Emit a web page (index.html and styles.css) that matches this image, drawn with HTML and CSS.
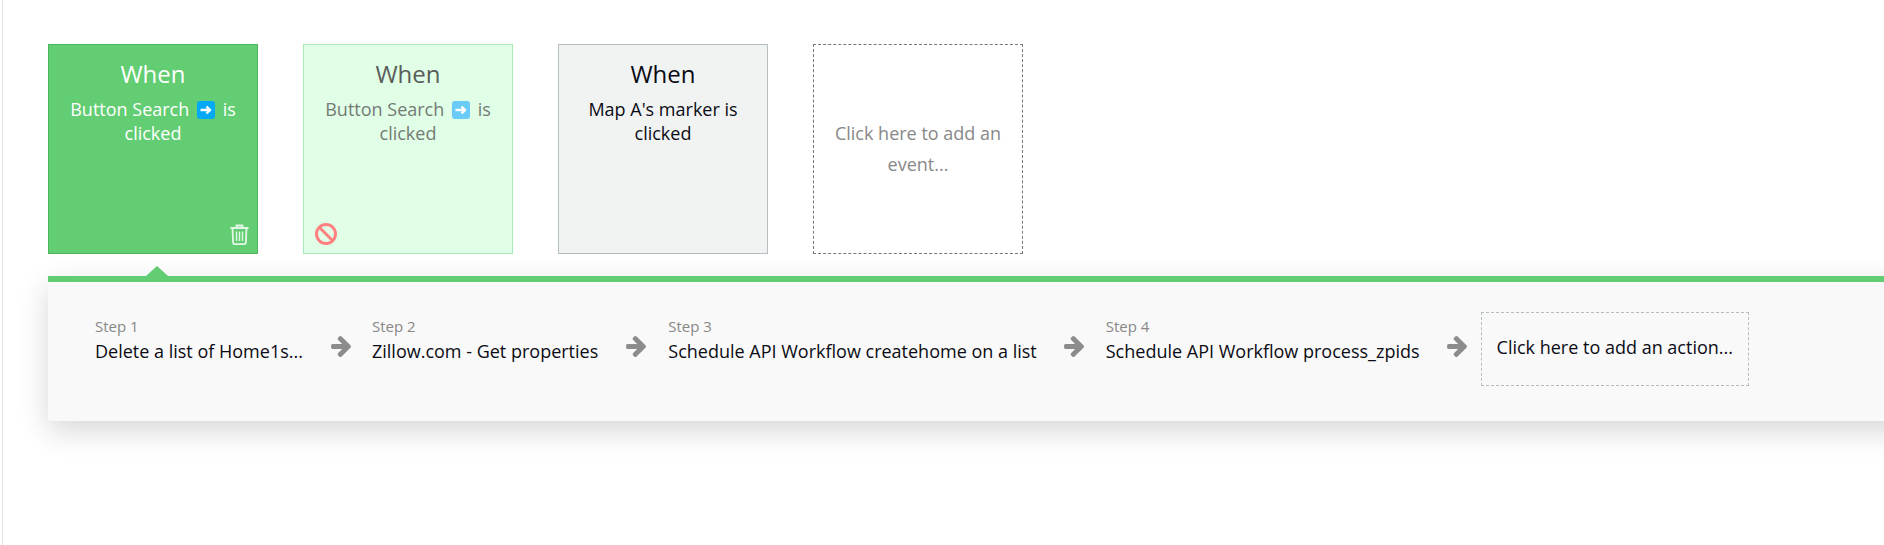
FILE: index.html
```html
<!DOCTYPE html>
<html>
<head>
    <title>Workflow editor</title>
    <link rel="stylesheet" href="styles.css">
</head>
<body>
    <div class="canvas">
        <!-- Events -->
        <div class="events">
            <div class="event active">
                <div class="when">When</div>
                <div class="desc">Button Search
                    <svg class="emoji" viewBox="0 0 18 18"><rect width="18" height="18" rx="3" fill="#03a9f4"/><path d="M3.500 9h9M9.500 5.500 13 9l-3.500 3.500" fill="none" stroke="#fff" stroke-width="2.400"/></svg>
                    is<br>clicked</div>
                <svg class="trash" viewBox="0 0 19 21" fill="none" stroke="#e4f7e7" stroke-width="1.800">
                    <path d="M0.500 4h18M6.500 4V1.500h6V4M2.500 4l.6 14.500q.1 1.700 1.800 1.700h9.200q1.700 0 1.800-1.700L16.500 4"/>
                    <path d="M6.500 7.500v9.500M9.500 7.500v9.500M12.500 7.500v9.500" stroke-width="1.400"/>
                </svg>
            </div>
            <div class="event disabled">
                <div class="when">When</div>
                <div class="desc">Button Search
                    <svg class="emoji" viewBox="0 0 18 18"><rect width="18" height="18" rx="3" fill="#6acbf9"/><path d="M3.500 9h9M9.500 5.500 13 9l-3.500 3.500" fill="none" stroke="#fff" stroke-width="2.400"/></svg>
                    is<br>clicked</div>
                <svg class="ban" viewBox="0 0 22 22" fill="none" stroke="#ff8080" stroke-width="3">
                    <circle cx="11" cy="11" r="9.500"/>
                    <path d="M4.300 4.300l13.400 13.400"/>
                </svg>
            </div>
            <div class="event idle">
                <div class="when">When</div>
                <div class="desc">Map A's marker is clicked</div>
            </div>
            <div class="event add">Click here to add an event...</div>
        </div>

        <!-- Steps -->
        <div class="panel">
            <div class="pointer"></div>
            <div class="steps">
                <div class="step">
                    <div class="step-num">Step 1</div>
                    <div class="step-name">Delete a list of Home1s...</div>
                </div>
                <svg class="arrow" viewBox="128 181 1472 1558"><path d="M1600 960q0 54-37 91l-651 651q-39 37-91 37-51 0-90-37l-75-75q-38-38-38-91t38-91l293-293H245q-52 0-84.500-37.500T128 1024V896q0-53 32.500-90.500T245 768h704L656 474q-38-36-38-90t38-90l75-75q38-38 90-38 53 0 91 38l651 651q37 35 37 90z"/></svg>
                <div class="step">
                    <div class="step-num">Step 2</div>
                    <div class="step-name">Zillow.com - Get properties</div>
                </div>
                <svg class="arrow" viewBox="128 181 1472 1558"><path d="M1600 960q0 54-37 91l-651 651q-39 37-91 37-51 0-90-37l-75-75q-38-38-38-91t38-91l293-293H245q-52 0-84.500-37.500T128 1024V896q0-53 32.500-90.500T245 768h704L656 474q-38-36-38-90t38-90l75-75q38-38 90-38 53 0 91 38l651 651q37 35 37 90z"/></svg>
                <div class="step nudge">
                    <div class="step-num">Step 3</div>
                    <div class="step-name">Schedule API Workflow createhome on a list</div>
                </div>
                <svg class="arrow" viewBox="128 181 1472 1558"><path d="M1600 960q0 54-37 91l-651 651q-39 37-91 37-51 0-90-37l-75-75q-38-38-38-91t38-91l293-293H245q-52 0-84.500-37.500T128 1024V896q0-53 32.500-90.500T245 768h704L656 474q-38-36-38-90t38-90l75-75q38-38 90-38 53 0 91 38l651 651q37 35 37 90z"/></svg>
                <div class="step nudge">
                    <div class="step-num">Step 4</div>
                    <div class="step-name">Schedule API Workflow process_zpids</div>
                </div>
                <svg class="arrow last" viewBox="128 181 1472 1558"><path d="M1600 960q0 54-37 91l-651 651q-39 37-91 37-51 0-90-37l-75-75q-38-38-38-91t38-91l293-293H245q-52 0-84.500-37.500T128 1024V896q0-53 32.500-90.500T245 768h704L656 474q-38-36-38-90t38-90l75-75q38-38 90-38 53 0 91 38l651 651q37 35 37 90z"/></svg>
                <div class="add-action">Click here to add an action...</div>
            </div>
        </div>
    </div>
</body>
</html>
```

FILE: styles.css
```css
html, body { margin: 0; height: 100%; overflow: hidden; background: #fff; }
body { font-family: "Open Sans", sans-serif; font-size: 18px; color: #0b0b14; }
.canvas { height: 545px; margin-left: 2px; border-left: 1px solid #e0e0e0; padding: 44px 0 0 45px; box-sizing: border-box; overflow: hidden; }

.events { display: flex; gap: 45px; }
.event { position: relative; width: 210px; height: 210px; box-sizing: border-box; border: 1px solid #b5bec3; padding: 9px 16px; text-align: center; }
.when { font-size: 24px; line-height: 40px; }
.desc { line-height: 24px; margin-top: 3px; }
.emoji { width: 18px; height: 18px; vertical-align: -3px; margin: 0 3px; }
.event.active { background: #62cd72; border-color: #4ab75b; color: #fff; }
.event.disabled { background: #e0ffe6; border-color: #a9ebb8; color: #757a76; }
.event.disabled .when { color: #5a5d5a; }
.event.idle { background: #f1f3f3; }
.event.add { display: flex; align-items: center; justify-content: center; border: 1px dashed #777; color: #888; line-height: 31px; padding: 0 20px; }
.trash { position: absolute; right: 8px; bottom: 8px; width: 19px; height: 21px; }
.ban { position: absolute; left: 11px; bottom: 8px; width: 22px; height: 22px; }

.panel { position: relative; margin-top: 22px; width: 1900px; height: 145px; box-sizing: border-box; background: #f9f9f9; border-top: 6px solid #62cd72; border-radius: 0 0 0 2px; box-shadow: 0 10px 30px rgba(0, 0, 0, 0.16); }
.pointer { position: absolute; left: 98px; top: -16px; width: 0; height: 0; border-left: 11px solid transparent; border-right: 11px solid transparent; border-bottom: 10px solid #62cd72; }
.steps { display: flex; align-items: flex-start; padding: 30px 0 0 47px; }
.step { margin-top: 4px; white-space: nowrap; }
.step.nudge { margin-left: 1px; margin-right: -1px; }
.step-num { font-size: 15px; line-height: 20px; color: #888; }
.step-name { line-height: 24px; margin-top: 3px; }
.arrow { width: 20px; height: 21px; flex: none; fill: #8c8c8c; margin: 24px 21px 0 28px; }
.arrow.last { margin-right: 14px; }
.add-action { width: 268px; height: 74px; box-sizing: border-box; border: 1px dashed #b5bec3; padding: 22px 15px; line-height: 24px; white-space: nowrap; }
```
